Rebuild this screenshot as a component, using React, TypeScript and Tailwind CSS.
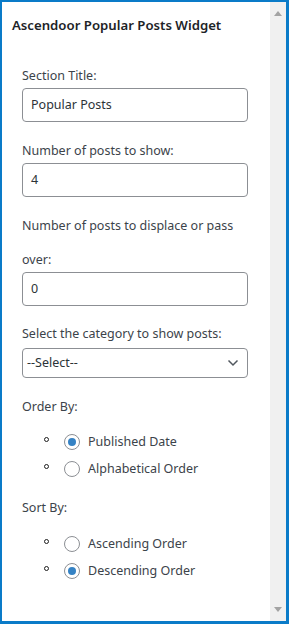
import React from "react";

const font = { fontFamily: '"Noto Sans", "Open Sans", sans-serif' };

const Radio = ({ label, checked }: { label: string; checked?: boolean }) => (
  <div className="flex h-[27px] items-center">
    <span className="ml-[22px] mb-[4px] h-[5px] w-[5px] rounded-full border border-[#1e1e1e]" />
    <span className="ml-[15px] flex h-4 w-4 items-center justify-center rounded-full border border-[#8c8f94] bg-white">
      {checked && <span className="h-2 w-2 rounded-full bg-[#3582c4]" />}
    </span>
    <span className="ml-2 text-[12.5px] text-[#3c434a]">{label}</span>
  </div>
);

const Field = ({ value }: { value: string }) => (
  <div className="mt-[2px] flex h-[34px] w-[226px] items-center rounded border border-[#8c8f94] bg-white px-2 text-[12.5px] text-[#2c3338]">
    {value}
  </div>
);

export default function App() {
  return (
    <div
      className="flex h-[624px] w-[289px] border-t-2 border-b-[3px] border-l-2 border-r-[3px] border-[#0a7bc8] bg-white"
      style={font}
    >
      {/* content */}
      <div className="flex-1 pl-[10px]">
        <h3 className="mt-[13px] text-[13.2px] font-semibold leading-5 text-[#1d2327]">
          Ascendoor Popular Posts Widget
        </h3>

        <div className="pl-[10px] text-[12.5px] leading-5 text-[#3c434a]">
          <p className="mt-[31px]">Section Title:</p>
          <Field value="Popular Posts" />

          <p className="mt-[19px]">Number of posts to show:</p>
          <Field value="4" />

          <p className="mt-[12px] mb-[-7px] w-[226px] leading-[34px]">
            Number of posts to displace or pass over:
          </p>
          <Field value="0" />

          <p className="mt-[18px]">Select the category to show posts:</p>
          <div className="mt-[4px] flex h-[30px] w-[226px] items-center justify-between rounded border border-[#8c8f94] bg-white pl-1 pr-[8px] text-[12.5px] text-[#2c3338]">
            <span>--Select--</span>
            <svg width="12" height="8" viewBox="0 0 12 8" fill="none">
              <path d="M1.5 1.5 6 6l4.5-4.5" stroke="#50575e" strokeWidth="1.5" />
            </svg>
          </div>

          <p className="mt-[19px]">Order By:</p>
          <div className="mt-[11px]">
            <Radio label="Published Date" checked />
            <Radio label="Alphabetical Order" />
          </div>

          <p className="mt-[16px]">Sort By:</p>
          <div className="mt-[12px]">
            <Radio label="Ascending Order" />
            <Radio label="Descending Order" checked />
          </div>
        </div>
      </div>

      {/* scrollbar */}
      <div className="flex w-4 flex-col items-center justify-between bg-[#f0f0f0] py-[9px]">
        <svg width="8" height="5" viewBox="0 0 8 5">
          <path d="M0 5 4 0l4 5z" fill="#a3a3a3" />
        </svg>
        <svg width="8" height="5" viewBox="0 0 8 5">
          <path d="M0 0h8L4 5z" fill="#a3a3a3" />
        </svg>
      </div>
    </div>
  );
}
